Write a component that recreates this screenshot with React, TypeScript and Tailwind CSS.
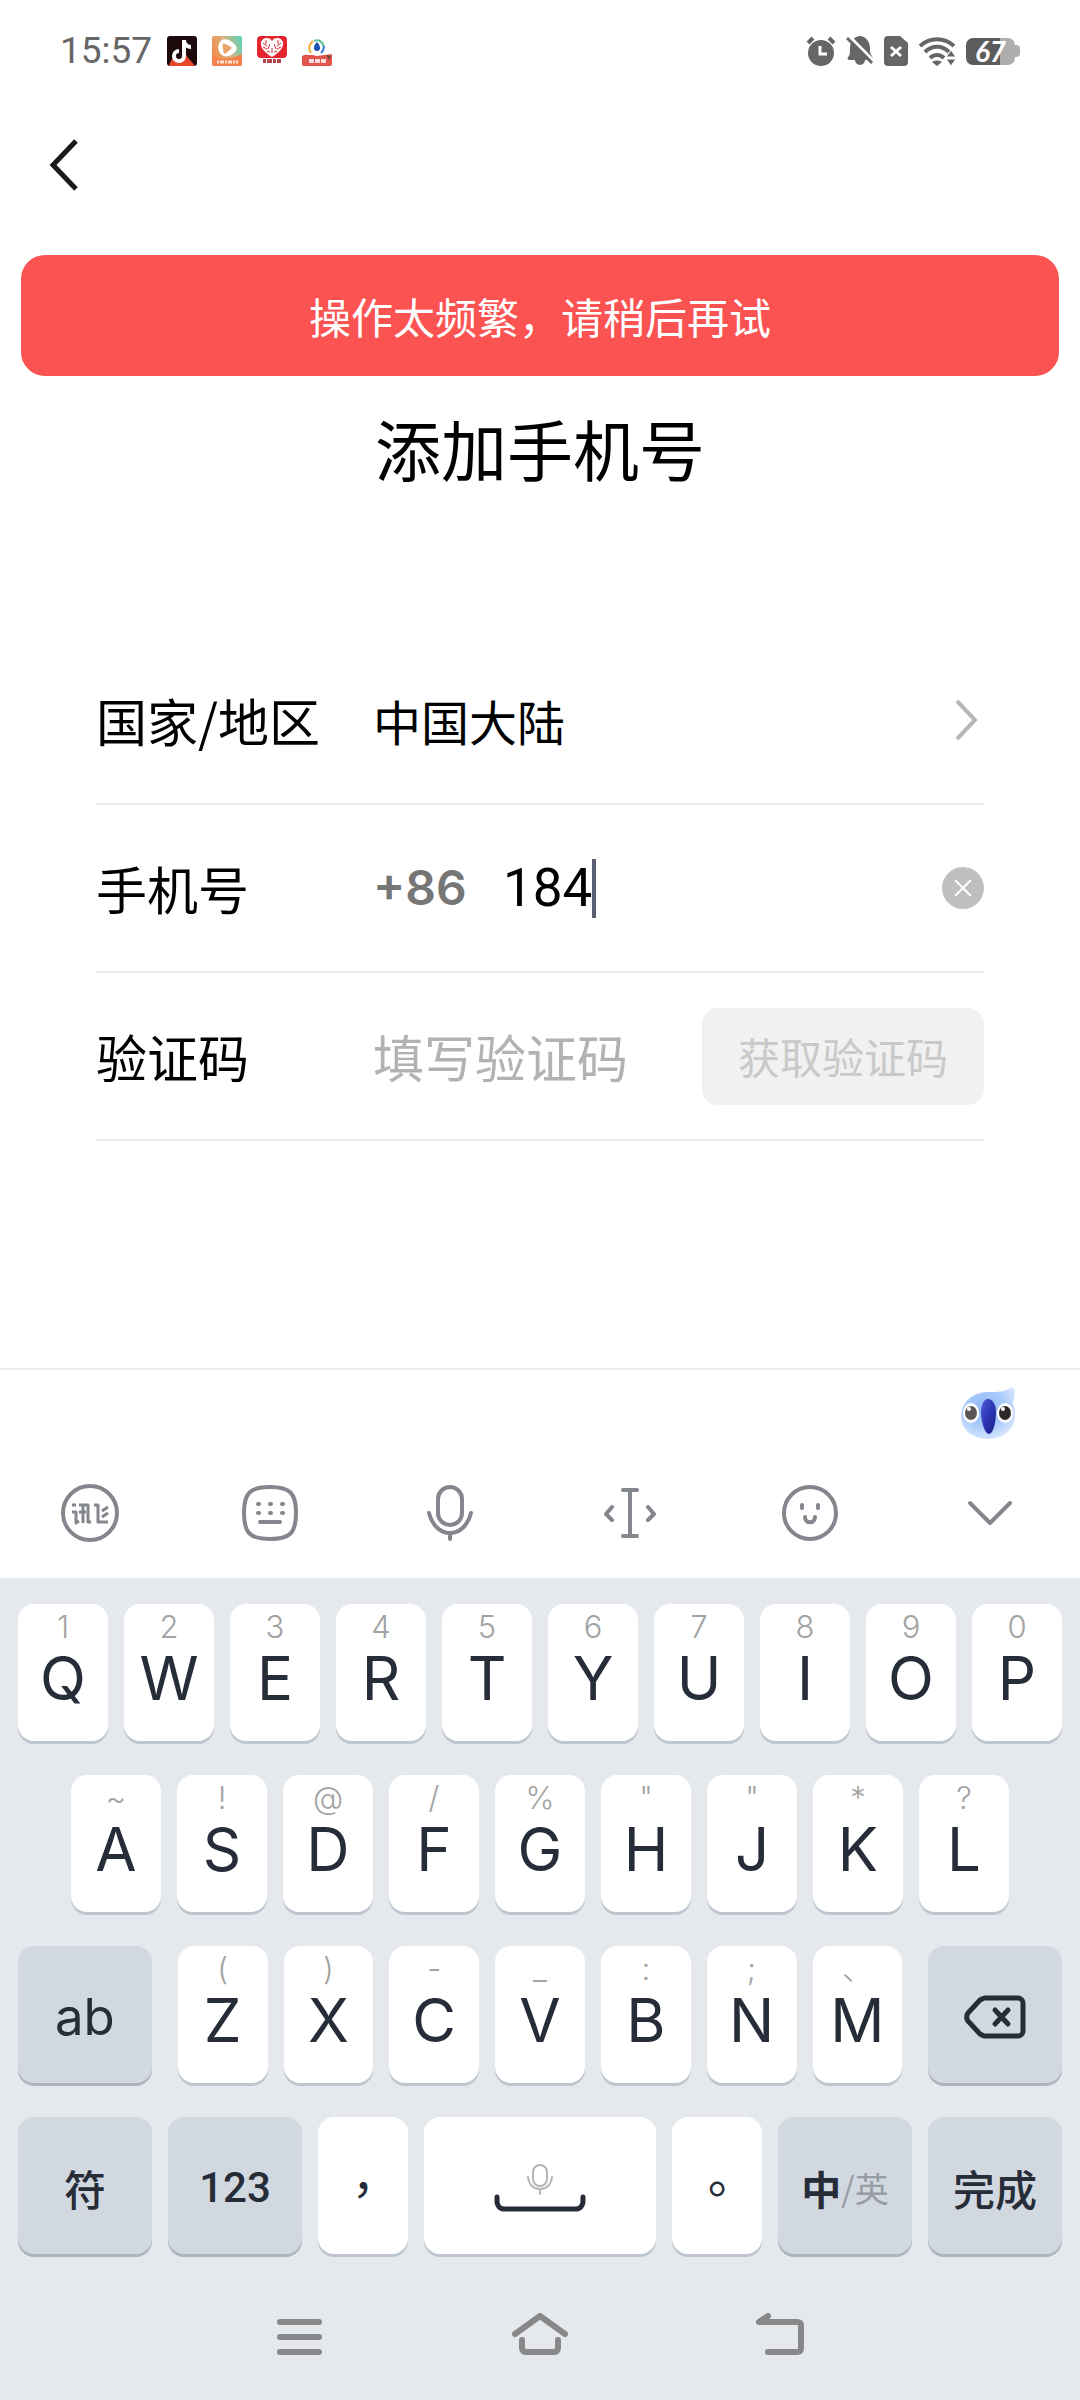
import type { ReactNode } from "react";

type LetterKey = { letter: string; hint: string };

const topRow: LetterKey[] = [
  { letter: "Q", hint: "1" },
  { letter: "W", hint: "2" },
  { letter: "E", hint: "3" },
  { letter: "R", hint: "4" },
  { letter: "T", hint: "5" },
  { letter: "Y", hint: "6" },
  { letter: "U", hint: "7" },
  { letter: "I", hint: "8" },
  { letter: "O", hint: "9" },
  { letter: "P", hint: "0" },
];

const homeRow: LetterKey[] = [
  { letter: "A", hint: "~" },
  { letter: "S", hint: "!" },
  { letter: "D", hint: "@" },
  { letter: "F", hint: "/" },
  { letter: "G", hint: "%" },
  { letter: "H", hint: '"' },
  { letter: "J", hint: '"' },
  { letter: "K", hint: "*" },
  { letter: "L", hint: "?" },
];

const bottomRow: LetterKey[] = [
  { letter: "Z", hint: "(" },
  { letter: "X", hint: ")" },
  { letter: "C", hint: "-" },
  { letter: "V", hint: "_" },
  { letter: "B", hint: ":" },
  { letter: "N", hint: ";" },
  { letter: "M", hint: "、" },
];

function StatusBar() {
  return (
    <header className="flex h-[102px] items-center justify-between px-[60px] text-[#666666]">
      <div className="flex items-center gap-[15px]">
        <span className="font-[Roboto,sans-serif] text-[37px] leading-[38px]">15:57</span>
        <svg width="30" height="30" viewBox="0 0 30 30" aria-hidden="true">
          <rect width="30" height="30" rx="3" fill="#1d0a0c" />
          <path d="M2 30c1-5 4-7 5-11 3 3 3 5 5 7 4-3 5-5 7-8 1 4 5 6 9 12z" fill="#e8472a" />
          <path d="M17 4v16a5 5 0 1 1-5-5M17 5c1 4 4 6 7 6" fill="none" stroke="#fff" strokeWidth="4" />
        </svg>
        <svg width="30" height="30" viewBox="0 0 30 30" aria-hidden="true">
          <defs>
            <linearGradient id="video" x1="0" y1="0.6" x2="1" y2="0.2">
              <stop offset="0" stopColor="#f58a4a" />
              <stop offset="0.5" stopColor="#dcb27f" />
              <stop offset="1" stopColor="#5fd3b8" />
            </linearGradient>
          </defs>
          <rect width="30" height="30" rx="2" fill="url(#video)" />
          <path d="M0 21c10 3 20 2 30-3v10a2 2 0 0 1-2 2H2a2 2 0 0 1-2-2z" fill="#f4814a" />
          <path d="M8 6c2-4 8-3 12 0 5 3 6 7 3 10-4 4-9 6-13 3-4-3-5-9-2-13z" fill="#fff" />
          <path d="M12 9l6 3-5 4z" fill="#e9a366" stroke="#e9a366" strokeWidth="3" strokeLinejoin="round" />
          <path d="M5 26h21" stroke="#fde3d2" strokeWidth="3" strokeDasharray="2 1 4 1" />
        </svg>
        <svg width="30" height="30" viewBox="0 0 30 30" aria-hidden="true">
          <rect width="30" height="22" rx="4" fill="#e4252d" />
          <path d="M15 21C7 16 3 11 4 6c2-5 9-5 11-1 2-4 9-4 11 1 1 5-3 10-11 15z" fill="#fff" />
          <path d="M6 7l4 3M9 4v4M6 11l4 2M13 8l-2 5M24 7l-4 3M21 4v4M24 11l-4 2M17 8l2 5M15 12v5M10 15l3 1M20 15l-3 1" stroke="#e4252d" strokeWidth="1" />
          <path d="M6 25h18" stroke="#b8404a" strokeWidth="4" strokeDasharray="3 1 5 1" />
        </svg>
        <svg width="30" height="30" viewBox="0 0 30 30" aria-hidden="true">
          <path d="M9 17c-3-4-2-9 2-12" fill="none" stroke="#f0a830" strokeWidth="2" />
          <path d="M12 5c5-2 9 1 10 6" fill="none" stroke="#5abf9a" strokeWidth="2" />
          <path d="M22 10c0 3-1 5-3 7" fill="none" stroke="#3b82e0" strokeWidth="2" />
          <path d="M15 6c2 2 3 4 3 6a3 3 0 0 1-6 0c0-2 1-4 3-6z" fill="#1c4fae" />
          <path d="M0 20c3-2 6-1 10-1l5 1 15-2v10a2 2 0 0 1-2 2H2a2 2 0 0 1-2-2z" fill="#e2554c" />
          <path d="M24 19l5 1-2 4z" fill="#6b4a36" />
          <path d="M7 25h17" stroke="#fff" strokeWidth="4" strokeDasharray="5 1" opacity="0.8" />
        </svg>
      </div>

      <div className="flex items-center gap-[10px]">
        <svg width="30" height="30" viewBox="0 0 30 30" aria-hidden="true">
          <circle cx="15" cy="17" r="13" fill="#666" />
          <path d="M2 7l5-5M28 7l-5-5" stroke="#666" strokeWidth="4" />
          <path d="M14 10v8h7" fill="none" stroke="#fff" strokeWidth="3" />
        </svg>
        <svg width="28" height="30" viewBox="0 0 28 30" aria-hidden="true">
          <path d="M4 24c-3 0-3-2-1-4 1-2 1-4 1-8C4 5 9 0 14 0s10 5 10 12c0 4 0 6 2 8 1 2 1 4-2 4h-5a5 5 0 0 1-10 0z" fill="#666" />
          <path d="M3 0l25 25" stroke="#fff" strokeWidth="3" />
          <path d="M1 2l25 25" stroke="#666" strokeWidth="3" />
        </svg>
        <svg width="24" height="30" viewBox="0 0 24 30" aria-hidden="true">
          <path d="M4 0h12l8 7v19a4 4 0 0 1-4 4H4a4 4 0 0 1-4-4V4a4 4 0 0 1 4-4z" fill="#666" />
          <path d="M7 11l10 9M17 11L7 20" stroke="#fff" strokeWidth="3" />
        </svg>
        <svg width="38" height="30" viewBox="0 0 38 30" aria-hidden="true">
          <g fill="none" stroke="#666" strokeWidth="4">
            <path d="M2 10c10-9 24-9 34 0" />
            <path d="M7 16c7-7 17-7 24 0" />
            <path d="M12 22c4-4 10-4 14 0" />
          </g>
          <path d="M14 26c3-2 7-2 10 0l-5 4z" fill="#666" />
          <path d="M33 14l5 7H28zM33 30l5-7H28z" fill="#666" stroke="#fff" strokeWidth="1" />
        </svg>
        <div className="flex items-center">
          <div className="flex h-[27px] w-[49px] items-center justify-center rounded-[7px] bg-linear-to-r from-[#5c5c5c] from-70% to-[#adadad] to-70% font-[Lato,sans-serif] text-[28px] font-bold leading-[27px] text-white italic">
            67
          </div>
          <div className="h-[12px] w-[5px] rounded-r-[4px] bg-[#adadad]" />
        </div>
      </div>
    </header>
  );
}

function PhoneForm() {
  return (
    <form className="mx-[96px] mt-[157px] text-[51px] leading-[60px] text-black">
      <div className="flex h-[168px] items-center border-b-2 border-[#e9e9e9]">
        <span className="w-[277px] shrink-0">国家/地区</span>
        <button type="button" aria-label="选择国家或地区" className="flex flex-1 items-center justify-between pr-[6px] text-left text-[48px]">
          中国大陆
          <svg width="24" height="42" viewBox="0 0 24 42" fill="none" stroke="#b8b8b8" strokeWidth="4" aria-hidden="true">
            <path d="M3 2l18 19L3 40" />
          </svg>
        </button>
      </div>

      <div className="flex h-[168px] items-center border-b-2 border-[#e9e9e9]">
        <label htmlFor="phone" className="w-[277px] shrink-0">
          手机号
        </label>
        <span className="w-[130px] shrink-0 font-[Inter,sans-serif] text-[48px] font-semibold text-[#767676]">+86</span>
        <div className="flex flex-1 items-center">
          <input id="phone" type="tel" defaultValue="184" className="field-sizing-content font-[Roboto,sans-serif] text-[53px] outline-none" />
          <span className="h-[59px] w-[4px] bg-[#5b6072]" />
        </div>
        <button type="button" aria-label="清空手机号" className="rounded-full bg-[#bfbfbf]">
          <svg width="42" height="42" viewBox="0 0 42 42" fill="none" stroke="#fff" strokeWidth="2" aria-hidden="true">
            <path d="M13 13l16 16M29 13L13 29" />
          </svg>
        </button>
      </div>

      <div className="flex h-[168px] items-center border-b-2 border-[#e9e9e9]">
        <label htmlFor="code" className="w-[277px] shrink-0">
          验证码
        </label>
        <input id="code" type="text" placeholder="填写验证码" className="min-w-0 flex-1 outline-none placeholder:text-[#b2b2b2]" />
        <button type="button" className="h-[97px] w-[282px] shrink-0 rounded-2xl bg-[#f1f1f1] text-[42px] text-[#c9c9c9]">
          获取验证码
        </button>
      </div>
    </form>
  );
}

function ToolIcon({ label, children }: { label: string; children: ReactNode }) {
  return (
    <button type="button" aria-label={label} className="flex h-[110px] items-center justify-center">
      <svg
        width="64"
        height="64"
        viewBox="-32 -32 64 64"
        fill="none"
        stroke="#83868c"
        strokeWidth="4"
        strokeLinecap="round"
        strokeLinejoin="round"
        aria-hidden="true"
      >
        {children}
      </svg>
    </button>
  );
}

function Toolbar() {
  return (
    <div className="border-t-2 border-[#ececee] pb-[10px]">
      <div className="flex h-[88px] items-center justify-end pr-[65px]">
        <button type="button" aria-label="智能助手">
          <svg width="54" height="54" viewBox="0 0 54 54" aria-hidden="true">
            <defs>
              <radialGradient id="body" cx="0.45" cy="0.4" r="0.62">
                <stop offset="0" stopColor="#8fb6f7" />
                <stop offset="0.6" stopColor="#a9ccfb" />
                <stop offset="1" stopColor="#d6e5fd" />
              </radialGradient>
              <linearGradient id="nose" x1="0" y1="0" x2="1" y2="1">
                <stop offset="0" stopColor="#4c5bd6" />
                <stop offset="0.5" stopColor="#2d35b4" />
                <stop offset="1" stopColor="#1a1f80" />
              </linearGradient>
            </defs>
            <path d="M0 30C0 15 12 5 27 5c10 0 17 0 22-4 3-2 5 1 5 4 0 4-1 7-2 11 2 4 2 10 2 14-1 13-12 22-27 22S0 43 0 30z" fill="url(#body)" />
            <ellipse cx="10" cy="26" rx="8" ry="10" fill="#fff" />
            <ellipse cx="44" cy="26" rx="8" ry="10" fill="#fff" />
            <ellipse cx="10" cy="26" rx="6" ry="7" fill="#5a5656" />
            <ellipse cx="44" cy="26" rx="6" ry="7" fill="#2b2727" />
            <circle cx="8" cy="22" r="2" fill="#fff" />
            <circle cx="42" cy="22" r="2" fill="#fff" />
            <path d="M27 12c5 0 8 6 8 13 0 10-3 22-7 22s-8-12-8-22c0-7 3-13 7-13z" fill="url(#nose)" />
          </svg>
        </button>
      </div>
      <div className="grid grid-cols-6">
        <ToolIcon label="输入法菜单">
          <circle r="27" />
          <g strokeWidth="3" strokeLinecap="butt">
            <path d="M-18-8h4M-18-1h4v11l3-2M-11-8h9V9h3M-7-8V10M-11-1h7M4-8h4V9h10M12-2l6-4M12 4l6-4" />
          </g>
        </ToolIcon>
        <ToolIcon label="切换键盘">
          <path d="M0-26c20 0 26 6 26 26S20 26 0 26-26 20-26 0-20-26 0-26z" />
          <path d="M-12-9h1M0-9h1M12-9h1M-12 0h1M0 0h1M12 0h1M-10 9h20" />
        </ToolIcon>
        <ToolIcon label="语音输入">
          <rect x="-12" y="-26" width="24" height="38" rx="12" />
          <path d="M-21 0C-18 12-10 20 0 20S18 12 21 0M0 20v6" />
        </ToolIcon>
        <ToolIcon label="移动光标">
          <path d="M-7-23H7M-7 23H7M0-23v46M-18-6l-6 7 6 6M18-6l6 7-6 6" />
        </ToolIcon>
        <ToolIcon label="表情">
          <circle r="26" />
          <path d="M-8-8v3M8-8v3M-5 4c0 7 10 7 10 0" />
        </ToolIcon>
        <ToolIcon label="收起键盘">
          <path d="M-20-10L0 10l20-20" />
        </ToolIcon>
      </div>
    </div>
  );
}

function Letter({ letter, hint }: LetterKey) {
  return (
    <button
      type="button"
      className="flex h-[137px] flex-[90] flex-col items-center rounded-2xl bg-white pt-[5px] font-[Inter,'Noto_Sans_CJK_SC',sans-serif] shadow-[0_3px_0_#bfc5cf]"
    >
      <span className="h-[36px] text-[31px] leading-[36px] font-light text-[#a3a3a3]">{hint}</span>
      <span className="text-[60px] leading-[66px] text-[#262d38]">{letter}</span>
    </button>
  );
}

function FunctionKey({ label, children }: { label?: string; children: ReactNode }) {
  return (
    <button
      type="button"
      aria-label={label}
      className="flex h-[137px] flex-[134] items-center justify-center rounded-2xl bg-[#d1d8e0] pt-1 text-[42px] leading-[60px] font-medium text-[#262d38] shadow-[0_3px_0_#adb5c1]"
    >
      {children}
    </button>
  );
}

function PunctuationKey({ children }: { children: ReactNode }) {
  return (
    <button
      type="button"
      className="flex h-[137px] flex-[90] items-center justify-center rounded-2xl bg-white font-['Noto_Sans_CJK_TC',sans-serif] text-[48px] leading-[60px] text-[#262d38] shadow-[0_3px_0_#bfc5cf]"
    >
      {children}
    </button>
  );
}

function Keyboard() {
  return (
    <div className="flex flex-col gap-[34px] px-[18px] pt-[26px]">
      <div className="flex gap-4">
        {topRow.map((key) => (
          <Letter key={key.letter} {...key} />
        ))}
      </div>
      <div className="flex gap-4 px-[53px]">
        {homeRow.map((key) => (
          <Letter key={key.letter} {...key} />
        ))}
      </div>
      <div className="flex gap-[26px]">
        <FunctionKey>
          <span className="font-[Inter,sans-serif] text-[51px] font-normal">ab</span>
        </FunctionKey>
        <div className="flex flex-[726] gap-4">
          {bottomRow.map((key) => (
            <Letter key={key.letter} {...key} />
          ))}
        </div>
        <FunctionKey label="删除">
          <svg width="64" height="48" viewBox="0 0 64 48" fill="none" stroke="#262d38" strokeWidth="5" strokeLinecap="round" strokeLinejoin="round" aria-hidden="true">
            <path d="M22 5h33a5 5 0 0 1 5 5v28a5 5 0 0 1-5 5H22c-2 0-3-1-5-2L5 28c-2-3-2-5 0-8L17 7c2-1 3-2 5-2z" />
            <path d="M32 17l13 14M45 17L32 31" />
          </svg>
        </FunctionKey>
      </div>
      <div className="flex gap-4">
        <FunctionKey>符</FunctionKey>
        <FunctionKey>
          <span className="font-[Roboto,sans-serif]">123</span>
        </FunctionKey>
        <PunctuationKey>，</PunctuationKey>
        <button
          type="button"
          aria-label="空格"
          className="flex h-[137px] flex-[232] items-center justify-center rounded-2xl bg-white shadow-[0_3px_0_#bfc5cf]"
        >
          <svg width="92" height="52" viewBox="0 0 92 52" fill="none" strokeLinecap="round" aria-hidden="true">
            <g stroke="#b3b3b3" strokeWidth="2">
              <rect x="39" y="5" width="14" height="21" rx="7" />
              <path d="M34 17c1 8 6 12 12 12s11-4 12-12M46 29v5" />
            </g>
            <path d="M3 37v4c0 5 3 8 8 8h70c5 0 8-3 8-8v-4" stroke="#262d38" strokeWidth="5" />
          </svg>
        </button>
        <PunctuationKey>。</PunctuationKey>
        <FunctionKey>
          <span className="text-[40px] font-bold">中</span>
          <span className="text-[34px] font-normal text-[#979ca5]">/英</span>
        </FunctionKey>
        <FunctionKey>完成</FunctionKey>
      </div>
    </div>
  );
}

function SystemNav() {
  return (
    <nav className="mx-auto mt-5 grid h-[126px] w-2/3 grid-cols-3 place-items-center">
      <button type="button" aria-label="最近任务">
        <svg width="60" height="48" viewBox="0 0 60 48" fill="none" stroke="#888" strokeWidth="6" strokeLinecap="round" aria-hidden="true">
          <path d="M10 9h39M10 24h39M10 39h39" />
        </svg>
      </button>
      <button type="button" aria-label="主屏幕">
        <svg width="60" height="48" viewBox="0 0 60 48" fill="none" stroke="#888" strokeWidth="6" strokeLinecap="round" strokeLinejoin="round" aria-hidden="true">
          <path d="M5 21L30 3l25 18M12 27v8c0 3 2 4 4 4h28c2 0 4-1 4-4v-8" />
        </svg>
      </button>
      <button type="button" aria-label="返回上一级">
        <svg width="60" height="48" viewBox="0 0 60 48" fill="none" stroke="#888" strokeWidth="6" strokeLinecap="round" strokeLinejoin="round" aria-hidden="true">
          <path d="M18 3L9 9h38c3 0 4 1 4 4v22c0 3-1 4-4 4H18" />
        </svg>
      </button>
    </nav>
  );
}

export default function App() {
  return (
    <div className="flex min-h-screen flex-col bg-white font-['Noto_Sans_CJK_SC',sans-serif]">
      <StatusBar />
      <div className="flex h-[126px] items-center pl-[47px]">
        <button type="button" aria-label="返回">
          <svg width="34" height="54" viewBox="0 0 34 54" fill="none" stroke="#1a1a1a" strokeWidth="5" aria-hidden="true">
            <path d="M29 3L6 27l23 24" />
          </svg>
        </button>
      </div>

      <div role="alert" className="mx-[21px] mt-[27px] flex h-[121px] items-center justify-center rounded-3xl bg-[#fb5252] text-[42px] leading-[60px] text-white">
        操作太频繁，请稍后再试
      </div>
      <h1 className="mt-[38px] text-center text-[66px] leading-[66px] text-black">添加手机号</h1>

      <PhoneForm />

      <div className="mt-auto">
        <Toolbar />
        <div className="bg-[#e5e8ed]">
          <Keyboard />
          <SystemNav />
        </div>
      </div>
    </div>
  );
}
